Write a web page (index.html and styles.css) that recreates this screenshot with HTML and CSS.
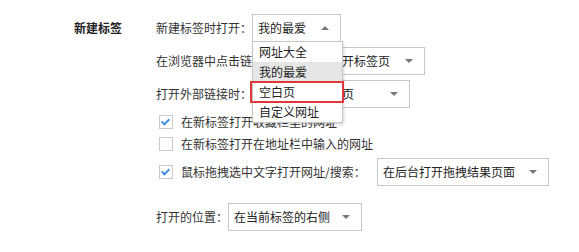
FILE: index.html
```html
<!DOCTYPE html>
<html lang="zh">
<head>
<meta charset="utf-8">
<link rel="stylesheet" href="styles.css">
</head>
<body>
<div class="section">
  <div class="title">新建标签</div>
  <div class="content">
    <div class="row row1">
      <span class="label">新建标签时打开：</span>
      <div class="select w1"><span>我的最爱</span><i class="arrow up"></i></div>
    </div>
    <div class="row row2">
      <span class="label">在浏览器中点击链接时：</span>
      <div class="select w2"><span>在后台打开标签页</span><i class="arrow"></i></div>
    </div>
    <div class="row row3">
      <span class="label">打开外部链接时：</span>
      <div class="select w3"><span>在前台打开标签页</span><i class="arrow"></i></div>
    </div>
    <div class="row check-row row4">
      <span class="cb checked"></span><span class="label">在新标签打开收藏栏里的网址</span>
    </div>
    <div class="row check-row row5">
      <span class="cb"></span><span class="label">在新标签打开在地址栏中输入的网址</span>
    </div>
    <div class="row check-row row6">
      <span class="cb checked"></span><span class="label drag">鼠标拖拽选中文字打开网址/搜索：</span>
      <div class="select w6"><span>在后台打开拖拽结果页面</span><i class="arrow"></i></div>
    </div>
    <div class="row row7">
      <span class="label">打开的位置：</span>
      <div class="select w7"><span>在当前标签的右侧</span><i class="arrow"></i></div>
    </div>
  </div>
</div>
<ul class="dropdown">
  <li>网址大全</li>
  <li class="hover">我的最爱</li>
  <li class="marked">空白页</li>
  <li>自定义网址</li>
</ul>
</body>
</html>
```
FILE: styles.css
```css
html, body {
  margin: 0;
  padding: 0;
  background: #fff;
}
body {
  width: 579px;
  height: 252px;
  overflow: hidden;
  position: relative;
  font-family: "Noto Sans CJK SC", "Noto Sans", sans-serif;
  font-size: 12px;
  color: #333;
}
.section {
  display: flex;
  padding: 14px 0 0 74px;
}
.title {
  width: 82px;
  height: 28px;
  line-height: 28px;
  font-weight: bold;
  color: #222;
}
.content {
  display: flex;
  flex-direction: column;
}
.row {
  display: flex;
  align-items: center;
  height: 28px;
}
.label {
  white-space: nowrap;
  line-height: 16px;
  flex: none;
}
.row2 { margin-top: 5px; }
.row2 .label { width: 132px; }
.row3 { margin-top: 5px; }
.check-row { height: 22px; padding-left: 3px; }
.row4 { margin-top: 3px; }
.row6 { height: 28px; margin-top: 3px; }
.row7 { margin-top: 17px; }
.drag { width: 196px; }
.cb {
  width: 12px;
  height: 12px;
  border: 1px solid #c9c9c9;
  margin-right: 8px;
  position: relative;
  flex: none;
  background: #fff;
}
.cb.checked::after {
  content: "";
  position: absolute;
  left: 3px;
  top: 1px;
  width: 3px;
  height: 6px;
  border: solid #3d8ee0;
  border-width: 0 2px 2px 0;
  transform: rotate(45deg);
}
.select {
  box-sizing: border-box;
  height: 28px;
  border: 1px solid #c6c6c6;
  display: flex;
  align-items: center;
  justify-content: space-between;
  padding: 0 11px 0 5px;
  color: #222;
  background: #fff;
  flex: none;
}
.select span { line-height: 16px; white-space: nowrap; }
.w1 { width: 89px; }
.w2 { width: 137px; }
.w3 { width: 158px; }
.w6 { width: 172px; }
.w7 { width: 134px; }
.arrow {
  width: 0;
  height: 0;
  border-left: 4px solid transparent;
  border-right: 4px solid transparent;
  border-top: 4px solid #777;
}
.arrow.up {
  border-top: 0;
  border-bottom: 4px solid #777;
}
.dropdown {
  position: absolute;
  left: 252px;
  top: 41px;
  width: 91px;
  box-sizing: border-box;
  margin: 0;
  padding: 0;
  list-style: none;
  background: #fff;
  border: 1px solid #c6c6c6;
  box-shadow: 1px 2px 3px rgba(0, 0, 0, 0.15);
  color: #222;
}
.dropdown li {
  height: 20px;
  line-height: 20px;
  padding-left: 6px;
  box-sizing: border-box;
}
.dropdown li.hover { background: #e6e6e6; }
.dropdown li.marked {
  outline: 2px solid #e0383a;
  outline-offset: -1px;
  position: relative;
  margin-left: -2px;
  margin-right: -1px;
  padding-left: 8px;
}
```
